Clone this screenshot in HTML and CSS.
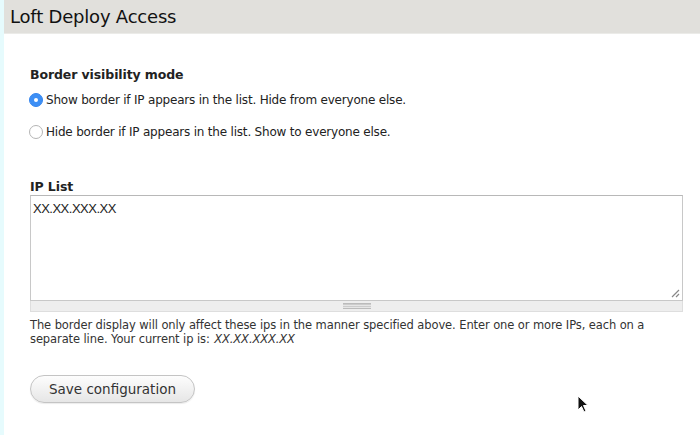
FILE: index.html
```html
<!DOCTYPE html>
<html>
<head>
<meta charset="utf-8">
<link rel="stylesheet" href="styles.css">
</head>
<body>
<div class="page">
  <header class="header"><h1 class="title">Loft Deploy Access</h1></header>
  <main class="content">
    <fieldset class="field">
      <div class="label">Border visibility mode</div>
      <label class="radio first"><span class="dot checked"></span>Show border if IP appears in the list. Hide from everyone else.</label>
      <label class="radio"><span class="dot"></span>Hide border if IP appears in the list. Show to everyone else.</label>
    </fieldset>
    <div class="field ip">
      <div class="label">IP List</div>
      <div class="textbox">
        <div class="textarea">XX.XX.XXX.XX
          <svg class="resize" width="9" height="9" viewBox="0 0 9 9"><path d="M1 8 L8 1 M5 8 L8 5" stroke="#888" stroke-width="1.2" fill="none"/></svg>
        </div>
        <div class="grippie"><span class="grip"></span></div>
      </div>
      <p class="desc">The border display will only affect these ips in the manner specified above. Enter one or more IPs, each on a separate line. Your current ip is: <em class="cur">XX.XX.XXX.XX</em></p>
    </div>
    <button class="btn">Save configuration</button>
  </main>
  <svg class="cursor" width="14" height="20" viewBox="0 0 14 20"><path d="M1 1 L1 15 L4.5 11.5 L7 17 L9 16 L6.5 10.5 L11 10.5 Z" fill="#111" stroke="#fff" stroke-width="1"/></svg>
</div>
</body>
</html>
```
FILE: styles.css
```css
html, body { margin: 0; padding: 0; background: #fff; }
body { width: 700px; height: 435px; overflow: hidden; font-family: "DejaVu Sans", "Liberation Sans", sans-serif; color: #222; }
.page { position: relative; height: 435px; border-left: 4px solid #e6fbfd; box-sizing: border-box; }
.header { background: #e1e0dc; height: 33px; border-bottom: 1px solid #ebebe8; display: flex; align-items: center; padding-left: 6px; }
.title { margin: 0; font-weight: normal; font-size: 18px; color: #111; letter-spacing: -0.2px; }
.content { padding: 33px 14px 0 26px; }
.field { border: 0; margin: 0; padding: 0; }
.label { font-weight: bold; font-size: 12.5px; color: #222; margin-bottom: 10px; letter-spacing: -0.1px; }
.radio { display: flex; align-items: center; font-size: 12px; color: #222; height: 16px; margin-bottom: 15px; letter-spacing: -0.2px; }
.radio.first { margin-bottom: 16px; }
.dot { width: 14px; height: 14px; border-radius: 50%; border: 1px solid #b5b5b5; box-sizing: border-box; margin-right: 3px; margin-left: -1px; background: #fff; flex: none; }
.dot.checked { background: #3d8ff5; border-color: #3585ee; position: relative; }
.dot.checked::after { content: ""; position: absolute; left: 4px; top: 4px; width: 4px; height: 4px; border-radius: 50%; background: #fff; }
.ip { margin-top: 24px; }
.ip .label { margin-bottom: 1px; }
.textbox { width: 653px; }
.textarea { position: relative; height: 106px; border: 1px solid #c8c8c8; border-top-color: #b8b8b8; box-sizing: border-box; font-family: "Liberation Sans", sans-serif; font-size: 13px; color: #222; padding: 5px 2px 3px; letter-spacing: -0.5px; }
.resize { position: absolute; right: 2px; bottom: 2px; }
.grippie { height: 11px; background: #eeeeee; border: 1px solid #dedede; border-top: 0; box-sizing: border-box; display: flex; justify-content: center; align-items: center; }
.grip { width: 28px; height: 4px; border-top: 1px solid #bbb; border-bottom: 1px solid #bbb; background: repeating-linear-gradient(#ccc 0 1px, #e6e6e6 1px 2px); }
.desc { margin: 6px 0 0; font-size: 11.5px; line-height: 14px; color: #333; letter-spacing: -0.1px; }
.cur { margin-left: 1px; }
.btn { margin-top: 29px; width: 165px; height: 28px; border-radius: 14px; border: 1px solid #c4c4c4; background: linear-gradient(#fdfdfd, #e6e6e6); font-family: "DejaVu Sans", sans-serif; font-size: 13.5px; color: #333; padding: 0; box-shadow: 0 1px 1px rgba(0,0,0,0.08); }
.cursor { position: absolute; left: 573px; top: 395px; }
```
